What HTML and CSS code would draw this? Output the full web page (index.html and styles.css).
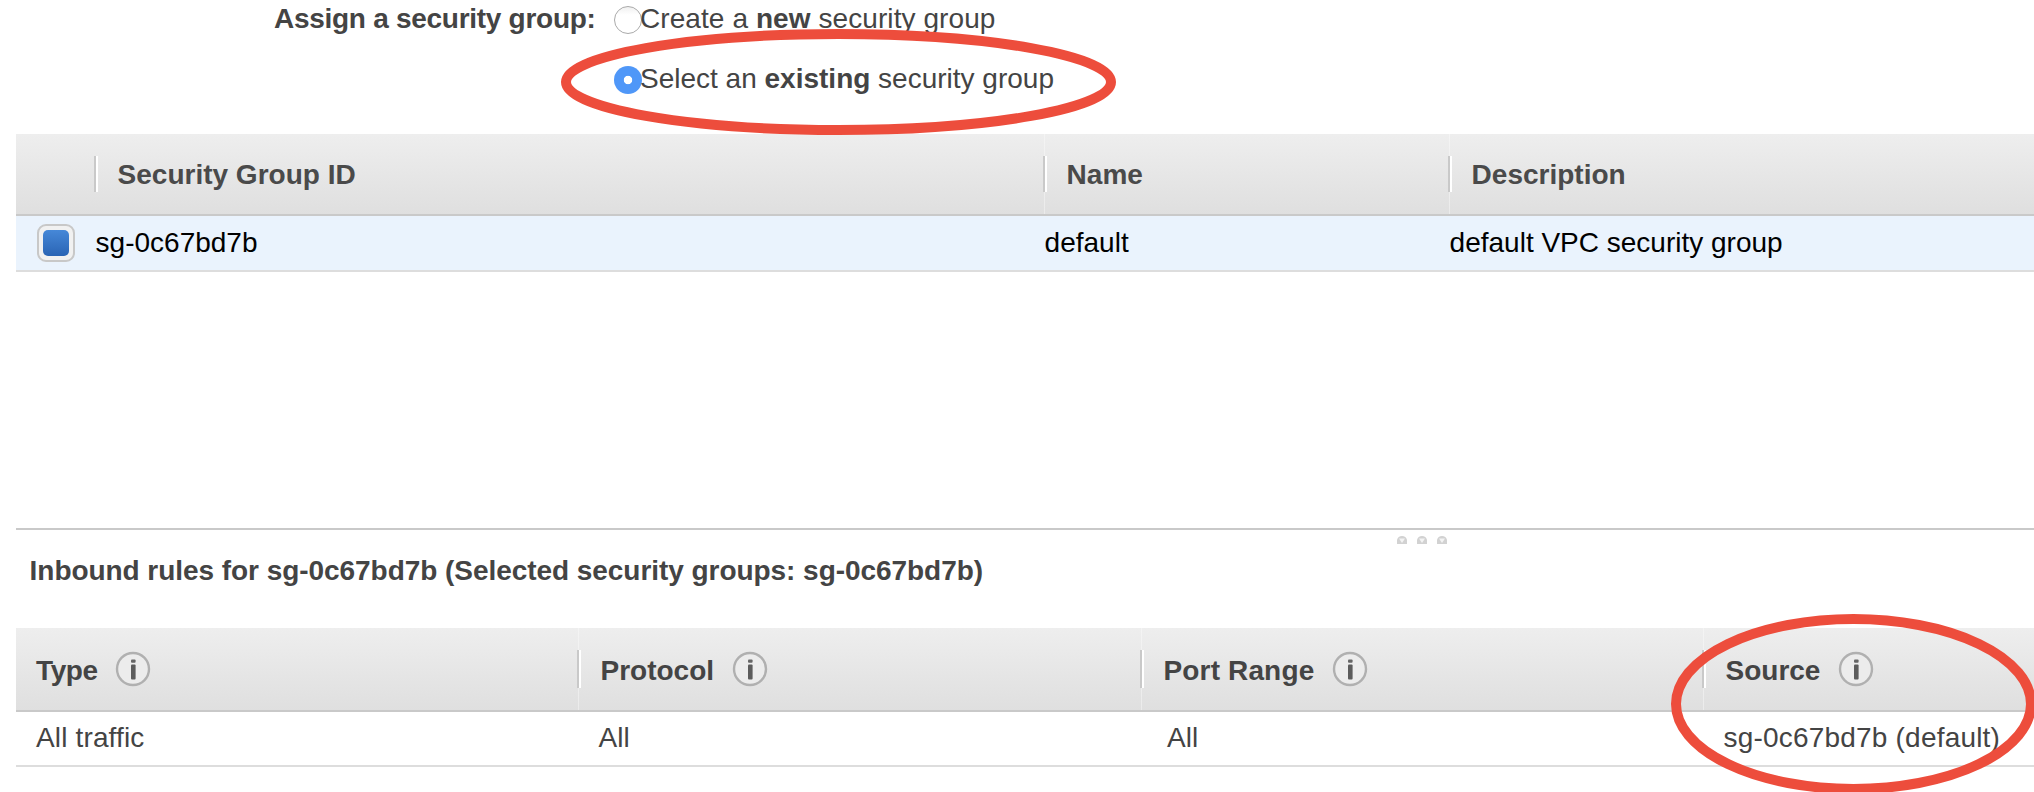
FILE: index.html
```html
<!DOCTYPE html>
<html lang="en">
<head>
<meta charset="utf-8">
<title>Configure Security Group</title>
<link rel="stylesheet" href="styles.css">
</head>
<body>
<svg class="defs" width="0" height="0" aria-hidden="true">
  <symbol id="info" viewBox="0 0 36 36">
    <circle cx="18" cy="18" r="16" fill="#ececec" stroke="#b0b0b0" stroke-width="2.4"/>
    <rect x="16" y="8.4" width="4.6" height="3.4" rx="1" fill="#666"/>
    <rect x="16" y="13.6" width="4.6" height="15" rx="1" fill="#5c5c5c"/>
  </symbol>
</svg>
<main class="page">
  <section class="assign">
    <div class="assign-label">Assign a security group:</div>
    <div class="options">
      <label class="option create"><span class="radio"></span><span>Create a <b>new</b> security group</span></label>
      <label class="option select"><span class="radio checked"></span><span>Select an <b>existing</b> security group</span></label>
    </div>
  </section>

  <section class="groups">
    <div class="row head">
      <div class="cell"></div>
      <div class="cell sep plain">Security Group ID</div>
      <div class="cell sep">Name</div>
      <div class="cell sep">Description</div>
    </div>
    <div class="row body">
      <div class="cell"><span class="checkbox"></span></div>
      <div class="cell">sg-0c67bd7b</div>
      <div class="cell">default</div>
      <div class="cell">default VPC security group</div>
    </div>
  </section>

  <div class="splitter">
    <svg width="54" height="10" viewBox="0 0 54 10">
      <g fill="#d2d2d2"><path d="M1 4Q2 0 6 0T11 4V8H1Z"/><path d="M21 4Q22 0 26 0T31 4V8H21Z"/><path d="M41 4Q42 0 46 0T51 4V8H41Z"/></g>
      <g fill="#f4f4f4"><path d="M3 2.5H9L6 7Z"/><path d="M23 2.5H29L26 7Z"/><path d="M43 2.5H49L46 7Z"/></g>
    </svg>
  </div>

  <section class="rules">
    <h2 class="title">Inbound rules for sg-0c67bd7b (Selected security groups: sg-0c67bd7b)</h2>
    <div class="row head">
      <div class="cell type">Type<svg class="info"><use href="#info"/></svg></div>
      <div class="cell sep">Protocol<svg class="info"><use href="#info"/></svg></div>
      <div class="cell sep range">Port Range<svg class="info"><use href="#info"/></svg></div>
      <div class="cell sep">Source<svg class="info"><use href="#info"/></svg></div>
    </div>
    <div class="row body">
      <div class="cell">All traffic</div>
      <div class="cell">All</div>
      <div class="cell port">All</div>
      <div class="cell source">sg-0c67bd7b (default)</div>
    </div>
  </section>

  <svg class="marks" width="2034" height="792" viewBox="0 0 2034 792">
    <ellipse cx="838.5" cy="82" rx="272.5" ry="48"/>
    <ellipse cx="1853.5" cy="704" rx="177.5" ry="85"/>
  </svg>
</main>
</body>
</html>
```
FILE: styles.css
```css
* { box-sizing: border-box; }
body {
  margin: 0;
  background: #fff;
  color: #444;
  font: 28px/32px "Liberation Sans", Arial, sans-serif;
}
.defs { position: absolute; }
.page {
  position: relative;
  width: 2034px;
  height: 792px;
  overflow: hidden;
  white-space: nowrap;
}
.assign {
  display: flex;
  height: 134px;
  padding-top: 3px;
}
.assign-label {
  width: 614px;
  padding-left: 274px;
  font-weight: bold;
  letter-spacing: -0.28px;
}
.options {
  display: flex;
  flex-direction: column;
  gap: 28px;
}
.option { display: flex; height: 32px; letter-spacing: 0.08px; }
.select { letter-spacing: 0; }
.radio {
  width: 28px;
  height: 28px;
  margin: 3px -2px 0 0;
  border-radius: 50%;
  border: 1px solid #aaa;
  background: linear-gradient(#f0f0f0, #fff 30%);
}
.radio.checked {
  border: 0;
  background: radial-gradient(circle, #fff 3.8px, #4f97f8 4.6px);
}
.row { display: grid; margin-left: 16px; }
.cell { min-width: 0; }
.head {
  background: linear-gradient(#eee, #dfdfdf);
  border-bottom: 2px solid #c9c9c9;
  font-weight: bold;
}
.sep {
  background:
    linear-gradient(#c9c9c9, #c9c9c9) 0 22px / 2px var(--bar) no-repeat,
    linear-gradient(#fff, #fff) 2px 22px / 2px var(--bar) no-repeat,
    linear-gradient(#f4f4f4, #ebebeb) 1px 0 / 1px 100% no-repeat;
}
.sep.plain { background-size: 2px var(--bar), 2px var(--bar), 0 0; }
.groups { height: 394px; }
.groups .row { grid-template-columns: 78px 949px 405px 1fr; }
.groups .head { --bar: 36px; height: 82px; color: #4a4a4a; }
.groups .head .cell { padding: 25px 0 0 23.6px; }
.groups .body {
  height: 56px;
  background: #eaf3fd;
  border-bottom: 2px solid #ddd;
  color: #000;
}
.groups .body .cell { padding: 11px 0 0 1.6px; }
.groups .body .cell:first-child { padding: 8px 0 0 21px; }
.checkbox {
  display: block;
  width: 38px;
  height: 38px;
  padding: 4px;
  border: 2px solid #c8c8c8;
  border-radius: 9px;
  background: #f1f1f1;
}
.checkbox::before {
  content: "";
  display: block;
  width: 26px;
  height: 26px;
  border-radius: 5px;
  background: linear-gradient(#4688d8, #2a64b4);
}
.splitter {
  height: 26px;
  margin-left: 16px;
  padding: 6px 0 0 1380px;
  border-top: 2px solid #c9c9c9;
}
.splitter svg { display: block; }
.title {
  margin: 0;
  height: 74px;
  padding: 1px 0 0 29.6px;
  font-size: 28px;
  line-height: 32px;
  letter-spacing: -0.05px;
}
.rules .row { grid-template-columns: 561px 563px 562px 1fr; }
.rules .head { --bar: 38px; height: 84px; }
.rules .head .cell { display: flex; padding: 27px 0 0 23.5px; }
.rules .head .type { padding-left: 20px; letter-spacing: -0.4px; }
.rules .head .range { letter-spacing: 0.15px; }
.info { width: 36px; height: 36px; margin: -4px 0 0 17.5px; }
.rules .body { height: 55px; border-bottom: 2px solid #ddd; }
.rules .body .cell { padding: 10px 0 0 21.5px; }
.rules .body .cell:first-child { padding-left: 20px; letter-spacing: 0.15px; }
.rules .body .port { padding-left: 27px; }
.rules .body .source { padding-left: 21.5px; letter-spacing: 0.2px; }
.marks {
  position: absolute;
  left: 0;
  top: 0;
  fill: none;
  stroke: #ed4d3c;
  stroke-width: 10;
}
```
